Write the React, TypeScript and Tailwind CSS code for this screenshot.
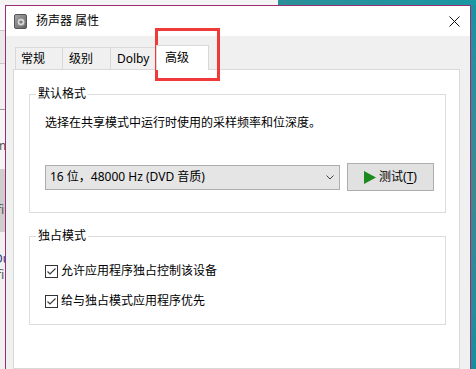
import React from 'react';

function SpeakerIcon() {
  return (
    <svg width="13" height="15" viewBox="0 0 13 15">
      <defs>
        <linearGradient id="spk" x1="0" y1="0" x2="1" y2="1">
          <stop offset="0" stopColor="#a9a9a9" />
          <stop offset="1" stopColor="#5e5e5e" />
        </linearGradient>
      </defs>
      <rect x="0.5" y="0.5" width="12" height="14" rx="1.5" fill="url(#spk)" stroke="#555" />
      <circle cx="7" cy="8" r="4" fill="#d6d6d6" stroke="#8a8a8a" />
      <circle cx="7" cy="8" r="1.6" fill="#7a7a7a" />
    </svg>
  );
}

function CheckBox({ label }: { label: string }) {
  return (
    <div className="flex items-center gap-[3px] h-[16px]">
      <div className="w-[13px] h-[13px] border border-[#333333] bg-white flex items-center justify-center">
        <svg width="11" height="11" viewBox="0 0 11 11">
          <path d="M1.5 5.5 L4 8 L9.5 2.5" fill="none" stroke="#3c3c3c" strokeWidth="1.2" />
        </svg>
      </div>
      <span className="leading-[16px]">{label}</span>
    </div>
  );
}

export default function App() {
  const tabs = [
    { name: '常规', cls: 'w-[48px] pl-[5px]' },
    { name: '级别', cls: '-ml-px w-[49px] pl-[6px]' },
    { name: 'Dolby', cls: '-ml-px w-[47px] pl-[6px]' },
  ];

  return (
    <div className="relative w-[476px] h-[369px] overflow-hidden flex flex-col bg-[#14909d] text-[12px] text-black font-[Noto_Sans,Noto_Sans_CJK_SC,sans-serif]">
      {/* strip above dialog */}
      <div className="flex h-[5px] shrink-0">
        <div className="w-[278px] bg-[#f4f4f4]" />
        <div className="flex-1 bg-gradient-to-r from-[#2b8f99] to-[#1a96a3]" />
      </div>

      <div className="flex flex-1 min-h-0">
        {/* window behind, left edge */}
        <div className="w-[5px] flex flex-col overflow-hidden bg-[#f0f0f0] text-[12px] leading-[16px] text-[#555]">
          <div className="h-[25px] bg-[#f8f8f8]" />
          <div className="h-[34px] bg-[#e9e9e9] border-y border-[#c9c9c9]" />
          <div className="h-[46px] bg-[#f0f0f0] border-b border-[#9a9a9a]" />
          <div className="h-[59px] bg-[#f4f4f4] pt-[28px] -ml-[5px]">m</div>
          <div className="h-[63px] bg-[#cdcdcd] pt-[33px] -ml-[3px]">fi</div>
          <div className="pt-[19px] -ml-[6px] text-[#1f3f8a]">Du</div>
          <div className="-ml-[3px]">fi</div>
        </div>

        {/* dialog */}
        <div className="w-[466px] flex flex-col border-l border-t border-r border-[#9b2d74]">
          <div className="h-[30px] shrink-0 bg-white flex items-center pl-[8px]">
            <SpeakerIcon />
            <span className="ml-[9px] leading-[16px]">扬声器 属性</span>
            <svg className="ml-auto mr-[10px]" width="11" height="11" viewBox="0 0 11 11">
              <path d="M0.5 0.5 L10.5 10.5 M10.5 0.5 L0.5 10.5" stroke="#111" strokeWidth="1" />
            </svg>
          </div>

          <div className="flex-1 flex flex-col bg-[#f0f0f0] pt-[9px] pl-[7px] pr-[10px]">
            <div className="flex items-end h-[24px] pl-[2px] shrink-0">
              {tabs.map(t => (
                <div
                  key={t.name}
                  className={`${t.cls} h-[22px] flex items-center border border-b-0 border-[#d9d9d9] bg-[#f0f0f0] leading-[16px]`}
                >
                  {t.name}
                </div>
              ))}
              <div className="relative z-10 -ml-px -mb-px w-[53px] h-[25px] pl-[8px] pb-[1px] flex items-center border border-b-0 border-[#d9d9d9] bg-white leading-[16px]">
                高级
              </div>
            </div>

            <div className="flex-1 bg-white border border-[#d9d9d9] pl-[15px] pt-[24px]">
              {/* 默认格式 */}
              <div className="w-[417px] h-[119px] border border-[#dcdcdc] pl-[15px]">
                <div className="-mt-[9px] ml-[6px] -translate-x-[15px] px-[2px] w-fit bg-white leading-[16px]">默认格式</div>
                <div className="mt-[13px] leading-[16px]">选择在共享模式中运行时使用的采样频率和位深度。</div>
                <div className="mt-[32px] flex items-center h-[28px]">
                  <div className="w-[295px] h-[25px] border border-[#adadad] bg-[#e5e5e5] flex items-center pl-[4px] pr-[5px]">
                    <span className="leading-[16px]">16 位，48000 Hz (DVD 音质)</span>
                    <svg className="ml-auto" width="8" height="5" viewBox="0 0 8 5">
                      <path d="M0.5 0.5 L4 4 L7.5 0.5" fill="none" stroke="#444" strokeWidth="1" />
                    </svg>
                  </div>
                  <div className="ml-[7px] w-[87px] h-[28px] border border-[#adadad] bg-[#e1e1e1] flex items-center justify-center gap-[3px]">
                    <svg width="12" height="13" viewBox="0 0 12 13">
                      <path d="M0 0 L12 6.5 L0 13 Z" fill="#1d8a1d" />
                    </svg>
                    <span className="leading-[16px]">
                      测试(<span className="underline underline-offset-2">T</span>)
                    </span>
                  </div>
                </div>
              </div>

              {/* 独占模式 */}
              <div className="mt-[23px] w-[417px] h-[89px] border border-[#dcdcdc] pl-[15px]">
                <div className="-mt-[9px] ml-[6px] -translate-x-[15px] px-[2px] w-fit bg-white leading-[16px]">独占模式</div>
                <div className="mt-[19px]">
                  <CheckBox label="允许应用程序独占控制该设备" />
                </div>
                <div className="mt-[14px]">
                  <CheckBox label="给与独占模式应用程序优先" />
                </div>
              </div>
            </div>
          </div>
        </div>

        {/* desktop on the right */}
        <div className="flex-1 bg-gradient-to-b from-[#1793a1] via-[#3a8a90] to-[#128f9c]" />
      </div>

      {/* red highlight around the selected tab */}
      <div className="absolute left-[155px] top-[28px] w-[65px] h-[53px] border-[3px] border-[#f03a3a]" />
    </div>
  );
}
